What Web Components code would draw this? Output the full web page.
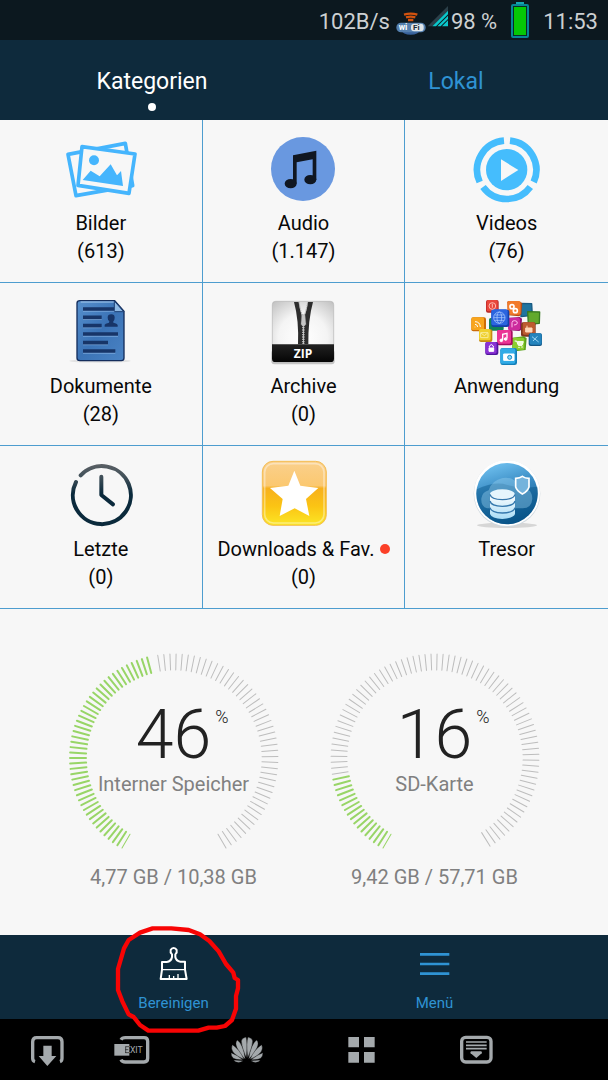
<!DOCTYPE html>
<html lang="de">
<head>
<meta charset="utf-8">
<meta name="viewport" content="width=device-width, initial-scale=1">
<title>Dateimanager</title>
<style>
  html { background: #000; }
  body { margin: 0; font-family: Roboto, "Noto Sans", sans-serif; --navy: #0e2a3c; --blue: #2f93d3; --line: #4d9dcf; --paper: #f7f7f7; }
</style>
</head>
<body>
<file-manager></file-manager>

<template id="file-manager">
  <style>
    :host { display: flex; flex-direction: column; min-height: 100vh; background: var(--paper); }
    main { flex: 1; display: flex; flex-direction: column; }
    .storage { flex: 1; display: grid; grid-template-columns: 1fr 1fr; padding: 44px 43px 24px; box-sizing: border-box; align-items: start; }
    svg { display: block; width: 72px; height: 68px; }
  </style>
  <status-bar></status-bar>
  <tab-header></tab-header>
  <main>
  <category-grid>
    <category-tile label="Bilder" count="(613)">
      <svg viewBox="45 30 216 204" aria-hidden="true">
        <g fill="none" stroke="#45b5fd" stroke-linejoin="round" stroke-width="11">
          <path d="M54 88L226 55 248 182 78 212Z"/>
          <path fill="#f7f7f7" d="M96 65L255 87 237 205 84 181Z"/>
        </g>
        <circle cx="132" cy="106" r="15" fill="#45b5fd"/>
        <path fill="#45b5fd" d="M98 165L122 137 149 154 182 118 201 151 213 138 219 183Z"/>
      </svg>
    </category-tile>
    <category-tile label="Audio" count="(1.147)">
      <svg viewBox="654 30 216 204" aria-hidden="true">
        <circle cx="762" cy="132" r="96" fill="#6998e0"/>
        <path fill="#101722" d="M732 91L802 77V165H791V103L743 112V176H732Z"/>
        <ellipse cx="725" cy="176" rx="18" ry="14" fill="#101722"/><ellipse cx="784" cy="164" rx="18" ry="14" fill="#101722"/>
      </svg>
    </category-tile>
    <category-tile label="Videos" count="(76)">
      <svg viewBox="363 30 216 204" aria-hidden="true">
        <g fill="none" stroke="#45bdfd" stroke-width="20">
          <path d="M480 47A88 88 0 0 1 551 171"/><path d="M541 186A88 88 0 0 1 399 186"/><path d="M389 171A88 88 0 0 1 462 47"/>
        </g>
        <circle cx="470" cy="134" r="62" fill="#45bdfd"/><path fill="#f7f7f7" d="M453 103L505 135 453 168Z"/>
      </svg>
    </category-tile>
    <category-tile label="Dokumente" count="(28)">
      <svg viewBox="45 24 216 204" aria-hidden="true">
        <defs><linearGradient id="doc" x2="1" y2="1"><stop stop-color="#5790cd"/><stop offset=".5" stop-color="#3b73b6"/><stop offset="1" stop-color="#4a83c4"/></linearGradient></defs>
        <ellipse cx="150" cy="213" rx="92" ry="5" fill="#e2e2e2"/>
        <path d="M90 32H194L222 64V204Q222 212 214 212H90Q81 212 81 204V40Q81 32 90 32Z" fill="url(#doc)" stroke="#142d5c" stroke-width="4"/>
        <path d="M92 36H192" stroke="#a9cdf0" stroke-width="3"/>
        <path d="M193 33V65H221Z" fill="#8fb9e4" stroke="#1c3f74" stroke-width="3"/>
        <path d="M99 63H193M99 88H155M99 113H155M99 138H204M99 164H174M99 189H196" stroke="#8eb8e6" stroke-width="3"/>
        <path d="M99 57H192M99 82H155M99 107H155M99 132H204M99 158H174M99 183H196" stroke="#173568" stroke-width="11"/>
        <path d="M164 110V104Q165 101 177 98L178 94Q173 90 173 83Q173 73 184 73Q194 73 194 83Q194 90 190 94L190 98Q202 101 203 105V110Z" fill="#173568"/>
      </svg>
    </category-tile>
    <category-tile label="Archive" count="(0)">
      <svg viewBox="654 24 216 204" aria-hidden="true">
        <defs>
          <radialGradient id="zw" cx=".5" cy=".6" r=".8"><stop stop-color="#fff"/><stop offset=".5" stop-color="#f4f4f4"/><stop offset="1" stop-color="#bdbdbd"/></radialGradient>
          <linearGradient id="zb" x2="0" y2="1"><stop stop-color="#222"/><stop offset="1" stop-color="#050505"/></linearGradient>
        </defs>
        <rect x="667" y="180" width="190" height="43" rx="9" fill="#c4c4c4"/>
        <rect x="670" y="34" width="184" height="182" rx="10" fill="url(#zw)" stroke="#b5b5b5" stroke-width="2"/>
        <path d="M735 36H749Q753 66 762 84V163H747Q750 90 735 36ZM792 36H777Q773 66 764 84V163H778Q777 90 792 36Z" fill="#2d2d2d"/>
        <path d="M763 104V163" stroke="#c9c9c9" stroke-width="7" stroke-dasharray="4 3"/>
        <path d="M750 37Q755 66 763 82Q771 66 776 37" fill="none" stroke="#999" stroke-width="3" stroke-dasharray="3 3"/>
        <path d="M758 74H768L771 103 763 111 756 103Z" fill="#c6c6c6" stroke="#888"/>
        <path d="M669 163H855V206Q855 216 845 216H679Q669 216 669 206Z" fill="url(#zb)"/>
        <text x="762" y="203" text-anchor="middle" font-family="Open Sans, sans-serif" font-weight="700" font-size="36" fill="#fff">ZIP</text>
      </svg>
    </category-tile>
    <category-tile label="Anwendung">
      <svg viewBox="93 24 216 204" aria-hidden="true">
        <g stroke-linejoin="round">
          <path d="M241 40L275 41 277 76 243 80Z" fill="#20749f" stroke="#185a83" stroke-width="4"/>
          <path d="M263 65L299 66 298 100 265 103Z" fill="#62a92c" stroke="#397a22" stroke-width="4"/>
          <rect x="147" y="84" width="44" height="38" rx="5" fill="#128256"/>
          <rect x="138" y="30" width="38" height="38" rx="6" fill="#b52626"/><rect x="140" y="30" width="33" height="34" rx="5" fill="#e9463b"/>
          <path d="M202 37Q202 33 207 33L240 35 247 40 244 73 238 79 204 76Z" fill="#b54c14"/><rect x="202" y="33" width="40" height="41" rx="5" fill="#f27b2b"/>
          <path d="M204 84L239 81 246 86 244 119 238 123 206 121Z" fill="#951273"/><rect x="204" y="83" width="36" height="37" rx="5" fill="#cc2b9d"/>
          <rect x="243" y="97" width="44" height="43" rx="6" fill="#81381e"/><rect x="248" y="97" width="37" height="37" rx="5" fill="#bd5b30"/>
          <rect x="94" y="82" width="44" height="42" rx="6" fill="#cc6c08"/><rect x="94" y="82" width="38" height="38" rx="5" fill="#f8a51d"/>
          <rect x="117" y="118" width="40" height="38" rx="6" fill="#c68c12"/><rect x="117" y="117" width="35" height="34" rx="5" fill="#efd02e"/>
          <rect x="266" y="130" width="40" height="38" rx="6" fill="#155684"/><rect x="269" y="130" width="36" height="34" rx="5" fill="#2484bd"/>
          <path d="M216 143L252 139 260 145 257 180 226 184 217 178Z" fill="#5ba21a"/><rect x="218" y="143" width="35" height="36" rx="5" fill="#8bcd2e"/>
          <rect x="171" y="120" width="47" height="46" rx="6" fill="#a60b60"/><rect x="171" y="120" width="42" height="41" rx="5" fill="#ea3595"/>
          <rect x="136" y="156" width="39" height="39" rx="6" fill="#4e169b"/><rect x="136" y="156" width="34" height="35" rx="5" fill="#8a31d4"/>
          <rect x="154" y="59" width="54" height="52" rx="7" fill="#1540aa"/><rect x="154" y="58" width="49" height="48" rx="6" fill="#2b65df"/>
          <rect x="181" y="174" width="50" height="51" rx="7" fill="#137fb8"/><rect x="181" y="175" width="45" height="46" rx="6" fill="#31abe6"/>
        </g>
        <g fill="none" stroke="#fff" stroke-width="3">
          <circle cx="157" cy="48" r="10" stroke="#ffb7ae"/><path d="M157 41V53" stroke="#ffb7ae"/>
          <circle cx="216" cy="50" r="6" stroke-width="5"/><circle cx="226" cy="62" r="6" stroke-width="5"/>
          <path d="M105 112V110M105 103Q112 103 113 111M105 95Q120 95 121 111"/>
          <g stroke="#b8d3ff" stroke-width="2"><circle cx="178" cy="83" r="17"/><ellipse cx="178" cy="83" rx="7" ry="17"/><path d="M161 83H195M164 75H192M164 91H192"/></g>
          <path d="M216 112V98Q216 92 224 92Q232 92 232 99Q231 105 222 105" stroke="#ffc1ed"/>
          <path d="M257 114H276V126H257ZM261 114V107" fill="#ffd7b7" stroke="#ffd7b7"/>
          <path d="M122 128H144V143H122ZM123 129L133 137 143 129" stroke="#f9ed9b"/>
          <path d="M276 140L296 156M279 153L292 139" stroke="#9cd6f4"/>
          <path d="M188 150V133L201 130V145" stroke-width="4"/><circle cx="184" cy="151" r="4" fill="#fff"/><circle cx="197" cy="147" r="4" fill="#fff"/>
          <path d="M224 153H230L235 166H246L250 155H232" fill="#effcd0"/><circle cx="237" cy="172" r="1"/><circle cx="246" cy="171" r="1"/>
          <path d="M148 173V168Q154 159 160 168V173"/><path fill="#fff" d="M147 174H161V184H147Z"/>
          <path fill="#fff" d="M191 192H222V211H191Z"/><circle cx="209" cy="202" r="6" fill="#88d9f5" stroke="#1188c5"/>
        </g>
      </svg>
    </category-tile>
    <category-tile label="Letzte" count="(0)">
      <svg viewBox="45 33 216 204" aria-hidden="true">
        <defs><linearGradient id="clk" gradientUnits="userSpaceOnUse" x1="0" y1="42" x2="0" y2="130"><stop stop-color="#5b6065"/><stop offset=".45" stop-color="#405059"/><stop offset="1" stop-color="#0b2a3c"/></linearGradient></defs>
        <g fill="none" stroke="url(#clk)" stroke-width="12" stroke-linecap="round">
          <path d="M92 76A87 87 0 1 1 78 96"/><path d="M154 80V135L189 163" stroke-linejoin="round"/>
        </g>
      </svg>
    </category-tile>
    <category-tile label="Downloads &amp; Fav." count="(0)" unread>
      <svg viewBox="654 33 216 204" overflow="visible" aria-hidden="true">
        <defs>
          <linearGradient id="fav" x2="0" y2="1"><stop stop-color="#fad08c"/><stop offset=".38" stop-color="#fbc870"/><stop offset=".42" stop-color="#f7b01c"/><stop offset=".7" stop-color="#fbc414"/><stop offset="1" stop-color="#fbe625"/></linearGradient>
        </defs>
        <rect x="640" y="34" width="192" height="192" rx="32" fill="url(#fav)" stroke="#f4bd54" stroke-width="3"/>
        <rect x="647" y="41" width="178" height="178" rx="26" fill="none" stroke="#fff" stroke-opacity=".4" stroke-width="5"/>
        <path fill="#fff" d="M736 62L754 107 808 114 771 147 781 198 737 175 692 198 701 147 663 114 718 107Z"/>
      </svg>
    </category-tile>
    <category-tile label="Tresor">
      <svg viewBox="93 33 216 204" aria-hidden="true">
        <defs>
          <linearGradient id="sky" x1=".3" x2=".6" y2="1"><stop stop-color="#6fc0ef"/><stop offset=".45" stop-color="#3587c0"/><stop offset="1" stop-color="#085186"/></linearGradient>
          <linearGradient id="cyl" x2="0" y2="1"><stop stop-color="#fff"/><stop offset="1" stop-color="#a9dcf5"/></linearGradient>
        </defs>
        <ellipse cx="201" cy="226" rx="90" ry="8" fill="#d6d6d6"/>
        <circle cx="201" cy="131" r="100" fill="#cfd8df"/><circle cx="201" cy="129" r="99" fill="#fff"/>
        <circle cx="201" cy="131" r="92" fill="url(#sky)"/>
        <path d="M110 118Q165 92 202 105Q245 116 292 110Q301 153 270 190Q235 222 201 222Q151 222 124 181Q105 152 110 118Z" fill="#075488" opacity=".45"/>
        <path d="M141 175Q122 170 124 145Q127 126 146 121Q155 91 188 84Q220 79 235 105Q276 113 277 146Q275 174 248 175Z" fill="#9ad1ef" opacity=".4"/>
        <path d="M150 132V192Q155 205 187 207Q220 205 225 192V132Z" fill="url(#cyl)"/>
        <ellipse cx="187" cy="132" rx="37" ry="14" fill="#e5f5fd"/>
        <path d="M150 133Q153 148 187 149Q222 148 225 133M150 153Q153 168 187 169Q222 168 225 153M150 173Q153 188 187 189Q222 188 225 173" fill="none" stroke="#3578ad" stroke-width="4"/>
        <path d="M227 85Q240 84 247 79Q255 85 267 85V111Q263 124 247 132Q231 123 227 111Z" fill="#74b3dc" stroke="#fff" stroke-width="5"/>
      </svg>
    </category-tile>
  </category-grid>
  <section class="storage" aria-label="Speicher">
    <storage-gauge percent="46" name="Interner Speicher" usage="4,77 GB / 10,38 GB" used-end="-15" free-start="-9" free-end="150" free-steps="47"></storage-gauge>
    <storage-gauge percent="16" name="SD-Karte" usage="9,42 GB / 57,71 GB" used-end="-102" free-start="-99" free-end="148" free-steps="74"></storage-gauge>
  </section>
  </main>
  <action-bar></action-bar>
  <system-nav></system-nav>
</template>

<template id="status-bar">
  <style>
    :host { display: flex; justify-content: flex-end; align-items: center; height: 40px; padding-right: 10px; background: #0c181f; color: #ccd0d2; font-size: 22px; line-height: 28px; white-space: pre; }
    span { padding-top: 3px; }
    svg { display: block; flex: none; }
    .wifi { margin-left: 5px; } .cell { margin-right: 2px; } .battery { margin: 0 14px; }
  </style>
  <span>102B/s</span>
  <svg class="wifi" width="32" height="30" viewBox="282 15 96 90" role="img" aria-label="WLAN">
    <path d="M309 44Q329 38 349 44M315 52Q329 48 343 52M321 60H337" fill="none" stroke="#d4530f" stroke-width="7"/>
    <ellipse cx="329" cy="91" rx="27" ry="13" fill="#38629b"/><rect x="286" y="68" width="88" height="29" rx="14" fill="#547fae"/>
    <rect x="330" y="71" width="38" height="23" rx="9" fill="#dfe5e9"/>
    <text x="293" y="91" font-size="26" font-weight="700" fill="#fff" font-family="Roboto, sans-serif">wi</text>
    <text x="336" y="91" font-size="24" font-weight="700" fill="#1c2a34" font-family="Roboto, sans-serif">Fi</text>
  </svg>
  <svg class="cell" width="22" height="28" viewBox="380 18 66 84" role="img" aria-label="Mobilfunk">
    <path d="M382 79L443 18V32L396 79Z" fill="#2c404a"/><path d="M396 79L443 32V43L407 79ZM411 79L443 47V57L421 79ZM425 79L443 61V79Z" fill="#0bc7cb"/>
  </svg>
  <span>98 %</span>
  <svg class="battery" width="18" height="36" viewBox="0 0 18 36" role="img" aria-label="Akku">
    <path d="M5 1H13" stroke="#15a5af" stroke-width="2"/><rect x="1" y="3" width="16" height="32" rx="1" fill="#082d26" stroke="#078696" stroke-width="2"/><rect x="3" y="5" width="12" height="28" fill="#05c905"/>
  </svg>
  <span>11:53</span>
</template>

<template id="tab-header">
  <style>
    :host { display: block; background: var(--navy); }
    nav { display: grid; grid-template-columns: 1fr 1fr; height: 80px; }
    a { display: flex; flex-direction: column; align-items: center; padding-top: 28px; font-size: 23px; line-height: 28px; color: var(--blue); text-decoration: none; }
    a[aria-current] { color: #fff; }
    a[aria-current]::after { content: ""; width: 8px; height: 8px; margin-top: 7px; border-radius: 50%; background: #fff; }
  </style>
  <nav><a href="#kategorien" aria-current="page">Kategorien</a><a href="#lokal">Lokal</a></nav>
</template>

<template id="category-grid">
  <style>
    :host { display: grid; grid-template-columns: repeat(3, 1fr); grid-auto-rows: 163px; }
    ::slotted(*) { border-right: 1px solid var(--line); border-bottom: 1px solid var(--line); }
    ::slotted(:nth-child(3n)) { border-right: 0; }
  </style>
  <slot></slot>
</template>

<template id="category-tile">
  <style>
    :host { display: block; box-sizing: border-box; }
    button { display: flex; flex-direction: column; align-items: center; width: 100%; height: 100%; padding: 15px 0 0; border: 0; background: none; color: #080808; font: 20px/28px Roboto, sans-serif; white-space: nowrap; }
    .label { display: flex; align-items: center; gap: 5px; margin-top: 6px; }
    :host([unread]) .label::after { content: ""; width: 10px; height: 10px; border-radius: 50%; background: #fb4028; }
  </style>
  <button type="button"><slot></slot><span class="label"></span><span class="count"></span></button>
</template>

<template id="storage-gauge">
  <style>
    :host { display: flex; flex-direction: column; align-items: center; color: #808080; font-size: 20px; line-height: 28px; white-space: nowrap; }
    .dial { display: grid; width: 210px; }
    .dial > * { grid-area: 1 / 1; }
    svg { display: block; width: 210px; height: 196px; }
    .text { padding-top: 48px; text-align: center; }
    .value { display: grid; grid-template-columns: 1fr auto 1fr; margin-bottom: 1px; color: #222; }
    .number { grid-column: 2; font-size: 68px; font-weight: 300; line-height: 68px; }
    .unit { justify-self: start; margin: 4px 0 0 4px; font-size: 18px; line-height: 24px; font-weight: 300; }
    .usage { margin-top: 14px; }
  </style>
  <div class="dial">
    <svg viewBox="0 0 210 196" aria-hidden="true"></svg>
    <div class="text"><div class="value"><span class="number"></span><span class="unit">%</span></div><div class="name"></div></div>
  </div>
  <div class="usage"></div>
</template>

<template id="action-bar">
  <style>
    :host { display: grid; grid-template-columns: 1fr 1fr; height: 84px; padding: 0 43px; box-sizing: border-box; background: var(--navy); }
    button { position: relative; display: flex; flex-direction: column; align-items: center; padding: 11px 0 0; border: 0; background: none; color: var(--blue); font: 15px/20px Roboto, sans-serif; }
    .icon { display: block; width: 36px; height: 36px; margin-bottom: 11px; }
    .mark { position: absolute; z-index: 1; top: -11px; left: 50%; width: 130px; height: 114px; margin-left: -62px; pointer-events: none; }
  </style>
  <button type="button">
    <svg class="icon" viewBox="166 78 108 108" fill="none" stroke="#fff" stroke-width="6" stroke-linejoin="round" aria-hidden="true">
      <path d="M214 103Q208 97 210 90Q213 84 219 84Q225 84 228 90Q230 97 224 103V111Q226 123 239 125H253V149L258 177H180L184 149V126H198Q212 124 214 111Z"/>
      <path d="M184 149H253M206 177V165M219 177V168M232 177V162" stroke-width="4"/>
    </svg>
    <span>Bereinigen</span>
    <svg class="mark" viewBox="34 12 390 342" aria-hidden="true">
      <path d="M52 210V147L70 85 84 60 118 38 156 25H212L264 30 298 43 326 63 354 94 376 132 398 158 402 174 412 180V205L406 228V266L394 300 373 318 348 323H324L293 332H143L118 315 99 291 84 283 65 244Z" fill="none" stroke="#f80404" stroke-width="13" stroke-linejoin="round"/>
    </svg>
  </button>
  <button type="button">
    <svg class="icon" viewBox="949 78 108 108" aria-hidden="true"><path d="M958 103H1046M958 132H1046M958 161H1046" stroke="#2f93d3" stroke-width="8"/></svg>
    <span>Menü</span>
  </button>
</template>

<template id="system-nav">
  <style>
    :host { display: grid; grid-template-columns: 75px repeat(4, 1fr); align-items: center; justify-items: center; height: 61px; padding-right: 75px; box-sizing: border-box; background: #000; }
    button { display: block; padding: 0; border: 0; background: none; }
    button:first-of-type { justify-self: end; margin-right: 10px; }
    svg { display: block; width: 36px; height: 36px; }
  </style>
  <button type="button" aria-label="Ablegen"><svg viewBox="87 51 108 108"><path d="M105 140Q98 138 98 130V80Q98 68 110 68H174Q186 68 186 80V130Q186 138 180 140" fill="none" stroke="#a4a9ac" stroke-width="10"/><path d="M130 92H155V123H169L142 153 116 123H130Z" fill="#a4a9ac"/></svg></button>
  <button type="button" aria-label="Beenden"><svg viewBox="342 51 108 108"><path d="M363 74Q366 68 376 68H432Q443 68 443 79V130Q443 141 432 141H376Q366 141 363 134" fill="none" stroke="#a4a9ac" stroke-width="10"/><path d="M343 87H388V122H343Z" fill="#a4a9ac"/><text x="375" y="114" font-family="Roboto, sans-serif" font-size="26" fill="#a4a9ac">EXIT</text><path d="M376 95H387M376 104H385M376 113H387M377 95V114" stroke="#111" stroke-width="2"/></svg></button>
  <button type="button" aria-label="Start"><svg viewBox="687 51 108 108" fill="#a4a9ac"><g id="petals" stroke="#000" stroke-width="1"><path d="M739 128Q725 102 724 78Q725 69 738 66Q744 82 739 128Z"/><path d="M736 132Q719 120 711 98Q704 83 712 75Q729 87 736 132Z"/><path d="M732 133Q708 124 699 111Q692 100 697 89Q718 102 732 133Z"/><path d="M728 134Q708 135 700 130Q693 124 693 113Q710 119 728 134Z"/><path d="M730 137Q721 143 713 142Q705 142 701 135Z"/></g><use href="#petals" transform="matrix(-1 0 0 1 1482 0)"/></svg></button>
  <button type="button" aria-label="Übersicht"><svg viewBox="129 51 108 108" fill="#a4a9ac"><path d="M145 66H177V97H145ZM192 66H224V97H192ZM145 111H177V143H145ZM192 111H224V143H192Z"/></svg></button>
  <button type="button" aria-label="Benachrichtigungen"><svg viewBox="474 51 108 108"><rect x="485" y="67" width="88" height="74" rx="12" fill="none" stroke="#a4a9ac" stroke-width="10"/><path d="M498 81H560M498 91H560M498 101H560" stroke="#a4a9ac" stroke-width="5"/><path d="M514 109H543Q548 111 545 115L529 129 512 115Q509 111 514 109Z" fill="#a4a9ac"/></svg></button>
</template>

<script>
  class TemplateElement extends HTMLElement {
    constructor() {
      super();
      this.attachShadow({ mode: "open" }).append(document.getElementById(this.localName).content.cloneNode(true));
    }
    fill(selector, attribute) {
      this.shadowRoot.querySelector(selector).textContent = this.getAttribute(attribute) || "";
    }
  }

  class CategoryTile extends TemplateElement {
    connectedCallback() {
      this.fill(".label", "label");
      this.fill(".count", "count");
    }
  }

  class StorageGauge extends TemplateElement {
    connectedCallback() {
      this.fill(".number", "percent");
      this.fill(".name", "name");
      this.fill(".usage", "usage");
      const number = name => Number(this.getAttribute(name));
      const tick = (angle, colour, width) =>
        `<path d="M105 1V17" stroke="${colour}" stroke-width="${width}" stroke-linecap="round" transform="rotate(${angle} 105 105)"/>`;
      let ticks = "";
      // Angles run clockwise from the top of the dial.
      for (let a = -150; a <= number("used-end"); a += 3) ticks += tick(a, "#98d567", a === -150 ? 1 : 2);
      const start = number("free-start"), steps = number("free-steps");
      for (let i = 0; i <= steps; i++) ticks += tick(start + (number("free-end") - start) * i / steps, "#bdbdbd", 1);
      this.shadowRoot.querySelector("svg").innerHTML = ticks;
    }
  }

  for (const name of ["status-bar", "tab-header", "category-grid", "action-bar", "system-nav"])
    customElements.define(name, class extends TemplateElement {});
  customElements.define("category-tile", CategoryTile);
  customElements.define("storage-gauge", StorageGauge);
  customElements.define("file-manager", class extends TemplateElement {});
</script>
</body>
</html>
